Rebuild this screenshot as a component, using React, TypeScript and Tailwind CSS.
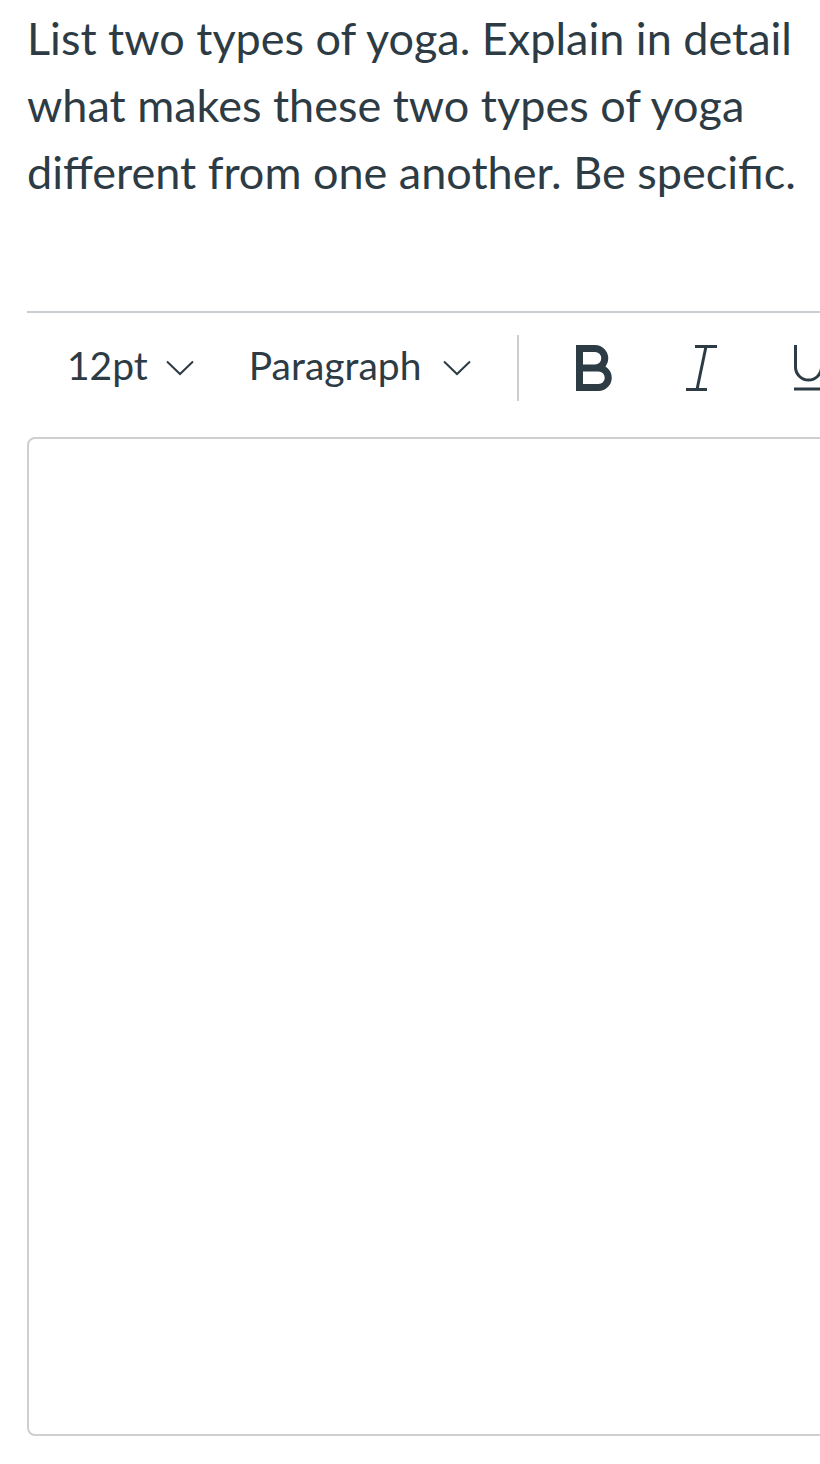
import React from "react";

const Chevron = () => (
  <svg width="28" height="16" viewBox="0 0 28 16" className="shrink-0">
    <path d="M1 1.5 L14 14 L27 1.5" fill="none" stroke="#2d3b45" strokeWidth="2" />
  </svg>
);

export default function App() {
  return (
    <div className="w-[820px] h-[1464px] overflow-hidden bg-white text-[#2d3b45]" style={{ fontFamily: "Lato, 'Open Sans', sans-serif" }}>
      <div className="pl-[27px] pt-[5px] text-[45px] leading-[67px] whitespace-nowrap">
        <p>List two types of yoga. Explain in detail</p>
        <p>what makes these two types of yoga</p>
        <p>different from one another. Be specific.</p>
      </div>
      <div className="ml-[27px] mt-[105px] border-t-2 border-[#c9ced2]">
        <div className="flex items-center h-[110px] whitespace-nowrap">
          <span className="ml-[40px] mb-[5px] text-[39px] leading-none">12pt</span>
          <span className="ml-[18px]"><Chevron /></span>
          <span className="ml-[55px] mb-[5px] text-[39px] leading-none">Paragraph</span>
          <span className="ml-[22px]"><Chevron /></span>
          <span className="ml-[46px] w-[2px] h-[66px] bg-[#c9ced2] shrink-0" />
          <svg width="36" height="46" viewBox="0 0 36 46" className="ml-[57px] shrink-0">
            <path
              d="M3.5 0 V46 M0 3.5 H19 A9.75 9.75 0 0 1 19 23 H0 M0 23 H22.5 A9.75 9.75 0 0 1 22.5 42.5 H0"
              fill="none"
              stroke="#2d3b45"
              strokeWidth="7"
            />
          </svg>
          <svg width="32" height="46" viewBox="0 0 32 46" className="ml-[74px] shrink-0">
            <path d="M9 1.5 H31 M0 44.5 H21 M20 1.5 L11 44.5" fill="none" stroke="#2d3b45" strokeWidth="3" />
          </svg>
          <svg width="32" height="46" viewBox="0 0 32 46" className="ml-[76px] shrink-0">
            <path d="M1.5 0 V22 A13 13 0 0 0 27.5 22 V0 M0 44 H30" fill="none" stroke="#2d3b45" strokeWidth="3" />
          </svg>
        </div>
        <div className="mt-[14px] h-[999px] border-2 border-[#cfcfcf] rounded-[8px] w-[820px]" />
      </div>
    </div>
  );
}
